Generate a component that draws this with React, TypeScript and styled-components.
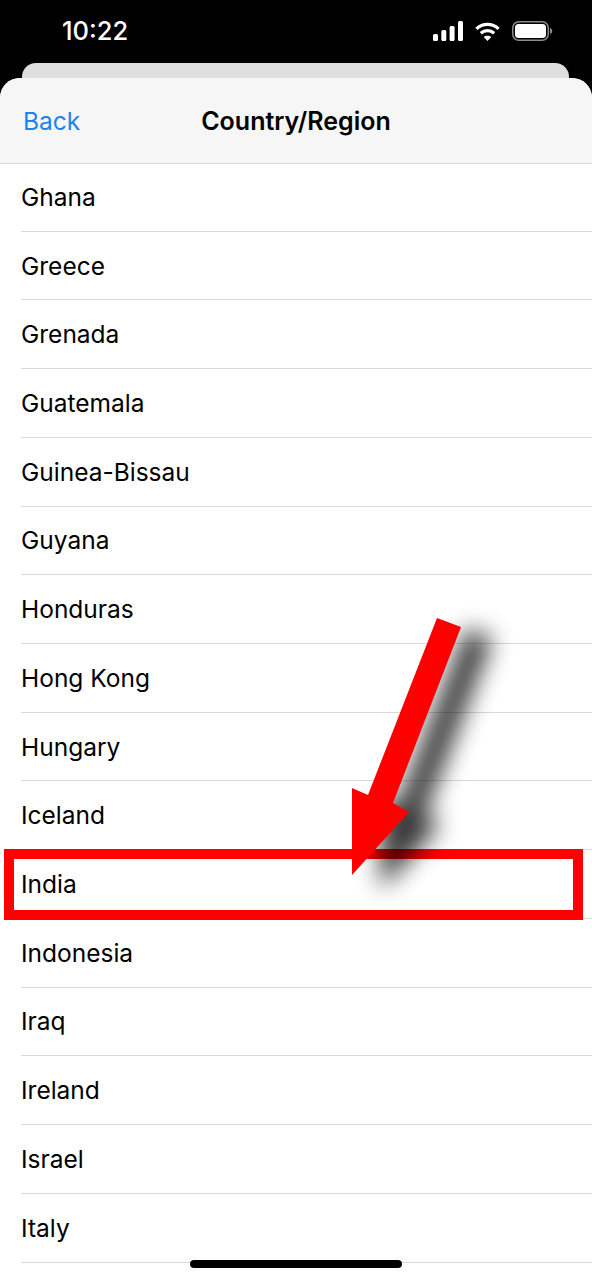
import React from 'react';
import styled, { createGlobalStyle } from 'styled-components';

const GlobalStyle = createGlobalStyle`
  html, body {
    margin: 0;
    padding: 0;
    background: #000;
  }
  body {
    font-family: Inter, "Liberation Sans", sans-serif;
    -webkit-font-smoothing: antialiased;
  }
`;

const Screen = styled.div`
  position: relative;
  width: 592px;
  height: 1280px;
  overflow: hidden;
  background: #000;
`;

const StatusBar = styled.div`
  height: 63px;
  display: flex;
  align-items: flex-start;
  justify-content: space-between;
  padding: 14px 39px 0 62px;
  box-sizing: border-box;
`;

const Time = styled.span`
  color: #fff;
  font-size: 25.5px;
  line-height: 34px;
  font-weight: 500;
`;

const StatusIcons = styled.div`
  display: flex;
  align-items: center;
  gap: 12px;
  height: 34px;
`;

const PeekCard = styled.div`
  height: 15px;
  margin: 0 23px 0 22px;
  background: #dedede;
  border-radius: 14px 14px 0 0;
`;

const Sheet = styled.div`
  height: 1202px;
  background: #fff;
  border-radius: 20px 20px 0 0;
  overflow: hidden;
`;

const NavBar = styled.div`
  position: relative;
  height: 86px;
  box-sizing: border-box;
  display: flex;
  align-items: center;
  justify-content: center;
  background: #f6f6f6;
  border-bottom: 1px solid #d9d9d9;
`;

const BackLink = styled.span`
  position: absolute;
  left: 23px;
  top: 25px;
  color: #1a84f2;
  font-size: 24.5px;
  line-height: 36px;
`;

const Title = styled.h1`
  margin: 1px 0 0;
  color: #000;
  font-size: 25px;
  line-height: 36px;
  font-weight: 600;
`;

const List = styled.div`
  display: flex;
  flex-direction: column;
`;

const Row = styled.div`
  height: 68.73px;
  box-sizing: border-box;
  margin-left: 21px;
  display: flex;
  align-items: center;
  color: #000;
  font-size: 24.5px;
  border-bottom: 1px solid #d9d9d9;

  &:first-child {
    height: 67.73px;
  }
`;

const HomeIndicator = styled.div`
  position: absolute;
  left: 190px;
  bottom: 12px;
  width: 212px;
  height: 8px;
  border-radius: 4px;
  background: #000;
`;

const Highlight = styled.div`
  position: absolute;
  left: 4px;
  top: 849px;
  width: 579px;
  height: 71px;
  box-sizing: border-box;
  border: 10px solid #ff0000;
`;

const ArrowOverlay = styled.svg`
  position: absolute;
  left: 0;
  top: 0;
  pointer-events: none;
`;

const countries = [
  'Ghana',
  'Greece',
  'Grenada',
  'Guatemala',
  'Guinea-Bissau',
  'Guyana',
  'Honduras',
  'Hong Kong',
  'Hungary',
  'Iceland',
  'India',
  'Indonesia',
  'Iraq',
  'Ireland',
  'Israel',
  'Italy',
];

const ARROW_PATH = 'M437 618 L461 627 L393 803 L409 812 L352 875 L352 788 L368 795 Z';

const SignalIcon = () => (
  <svg width="30" height="20" viewBox="0 0 30 20" fill="#fff">
    <rect x="0" y="13" width="5" height="7" rx="1.5" />
    <rect x="8.3" y="9" width="5" height="11" rx="1.5" />
    <rect x="16.6" y="5" width="5" height="15" rx="1.5" />
    <rect x="25" y="0" width="5" height="20" rx="1.5" />
  </svg>
);

const WifiIcon = () => (
  <svg width="25" height="19" viewBox="0 0 25 19" fill="none" stroke="#fff" strokeWidth="3.2">
    <path d="M1.4 6.8C7.6 1 17.4 1 23.6 6.8" />
    <path d="M5.8 11.2c3.8-3.5 9.6-3.5 13.4 0" />
    <path d="M12.5 19l-3.8-4c2.1-1.8 5.5-1.8 7.6 0z" fill="#fff" stroke="none" />
  </svg>
);

const BatteryIcon = () => (
  <svg width="41" height="20" viewBox="0 0 41 20" fill="none">
    <rect x="0.75" y="0.75" width="35.5" height="18.5" rx="6" stroke="#8c8c8c" strokeWidth="1.5" />
    <rect x="3" y="3" width="31" height="14" rx="3.5" fill="#fff" />
    <path d="M38 7c1.6.5 2.2 1.6 2.2 3s-.6 2.5-2.2 3z" fill="#8c8c8c" />
  </svg>
);

const App: React.FC = () => {
  return (
    <Screen>
      <GlobalStyle />
      <StatusBar>
        <Time>10:22</Time>
        <StatusIcons>
          <SignalIcon />
          <WifiIcon />
          <BatteryIcon />
        </StatusIcons>
      </StatusBar>
      <PeekCard />
      <Sheet>
        <NavBar>
          <BackLink>Back</BackLink>
          <Title>Country/Region</Title>
        </NavBar>
        <List>
          {countries.map((name) => (
            <Row key={name}>{name}</Row>
          ))}
        </List>
      </Sheet>
      <HomeIndicator />

      {/* annotation drawn over the screenshot */}
      <Highlight />
      <ArrowOverlay width="592" height="1280" viewBox="0 0 592 1280">
        <defs>
          <filter id="arrowBlur" x="-80%" y="-30%" width="260%" height="160%">
            <feGaussianBlur stdDeviation="12" />
          </filter>
        </defs>
        <path
          d={ARROW_PATH}
          transform="translate(30 12)"
          fill="#000"
          stroke="#000"
          strokeWidth="2"
          opacity="0.78"
          filter="url(#arrowBlur)"
        />
        <path d={ARROW_PATH} fill="#ff0000" />
      </ArrowOverlay>
    </Screen>
  );
};

export default App;
